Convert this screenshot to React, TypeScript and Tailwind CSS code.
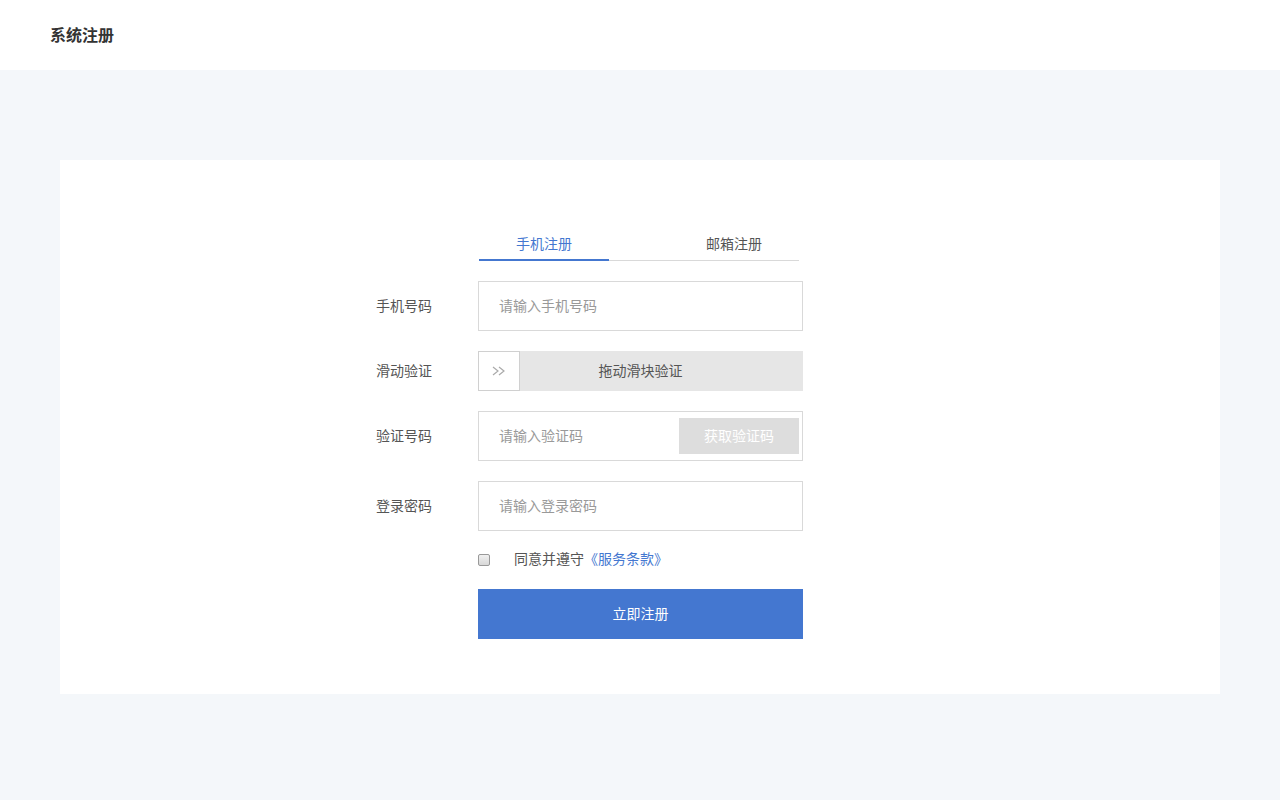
import { useState } from "react"

const font = { fontFamily: '"Noto Sans CJK SC", "Noto Sans", sans-serif' }

function Row({ label, children }: { label: string; children: React.ReactNode }) {
    return (
        <div className="flex items-center">
            <label className="w-[102px] text-sm text-[#555] pb-[3px]">{label}</label>
            <div className="w-[325px]">{children}</div>
        </div>
    )
}

export default function App() {
    const [tab, setTab] = useState(0)
    const [agree, setAgree] = useState(false)

    return (
        <div className="min-h-[800px] bg-[#f4f7fa]" style={font}>
            <header className="h-[70px] bg-white flex items-center px-[50px] pb-[3px]">
                <h1 className="text-base font-bold text-[#333]">系统注册</h1>
            </header>

            <main className="pt-[90px] px-[60px]">
                <div className="bg-white h-[534px] pt-[70px] pl-[316px]">
                    <div className="flex flex-col">
                        {/* tabs */}
                        <div className="flex ml-[103px] w-[320px] border-b border-[#d9d9d9] h-[31px]">
                            {["手机注册", "邮箱注册"].map((t, i) => (
                                <button
                                    key={t}
                                    onClick={() => setTab(i)}
                                    className={
                                        i === 0
                                            ? "w-[130px] text-sm pb-[4px] -mb-px border-b-2 " + (tab === i ? "border-[#4477d0] text-[#4477d0]" : "border-transparent text-[#555]")
                                            : "w-[130px] ml-auto text-sm pb-[4px] -mb-px border-b-2 " + (tab === i ? "border-[#4477d0] text-[#4477d0]" : "border-transparent text-[#555]")
                                    }
                                >
                                    {t}
                                </button>
                            ))}
                        </div>

                        <div className="flex flex-col gap-5 mt-5">
                            <Row label="手机号码">
                                <input
                                    placeholder="请输入手机号码"
                                    className="w-full h-[50px] border border-[#d9d9d9] px-5 pb-[3px] text-sm text-[#333] placeholder:text-[#999] outline-none"
                                />
                            </Row>

                            <Row label="滑动验证">
                                <div className="relative h-10 bg-[#e6e6e6] flex items-center justify-center">
                                    <div className="absolute left-0 top-0 h-10 w-[42px] bg-white border border-[#d0d0d0] flex items-center justify-center">
                                        <svg width="14" height="10" viewBox="0 0 14 10" fill="none" stroke="#aaa" strokeWidth="1.2">
                                            <path d="M1 1l5 4-5 4M7 1l5 4-5 4" />
                                        </svg>
                                    </div>
                                    <span className="text-sm text-[#555] pb-[2px]">拖动滑块验证</span>
                                </div>
                            </Row>

                            <Row label="验证号码">
                                <div className="h-[50px] border border-[#d9d9d9] flex items-center pl-5 pr-[3px]">
                                    <input
                                        placeholder="请输入验证码"
                                        className="flex-1 min-w-0 pb-[3px] text-sm text-[#333] placeholder:text-[#999] outline-none"
                                    />
                                    <button className="w-[120px] h-9 pb-[2px] bg-[#dddddd] text-sm text-white">获取验证码</button>
                                </div>
                            </Row>

                            <Row label="登录密码">
                                <input
                                    type="password"
                                    placeholder="请输入登录密码"
                                    className="w-full h-[50px] border border-[#d9d9d9] px-5 pb-[3px] text-sm text-[#333] placeholder:text-[#999] outline-none"
                                />
                            </Row>
                        </div>

                        <div className="ml-[102px] mt-[20px] flex items-center h-[17px]">
                            <input
                                type="checkbox"
                                checked={agree}
                                onChange={(e) => setAgree(e.target.checked)}
                                className="appearance-none w-[12px] h-[12px] m-0 mt-[1px] rounded-[2px] border border-[#999] bg-gradient-to-b from-[#f0f0f0] to-[#d8d8d8] checked:bg-[#4477d0]"
                            />
                            <span className="ml-[24px] pb-[4px] text-sm text-[#555]">
                                同意并遵守<a href="#" className="text-[#4477d0]">《服务条款》</a>
                            </span>
                        </div>

                        <button className="ml-[102px] mt-[21px] w-[325px] h-[50px] pb-[2px] bg-[#4477d0] text-sm text-white">
                            立即注册
                        </button>
                    </div>
                </div>
            </main>
        </div>
    )
}
